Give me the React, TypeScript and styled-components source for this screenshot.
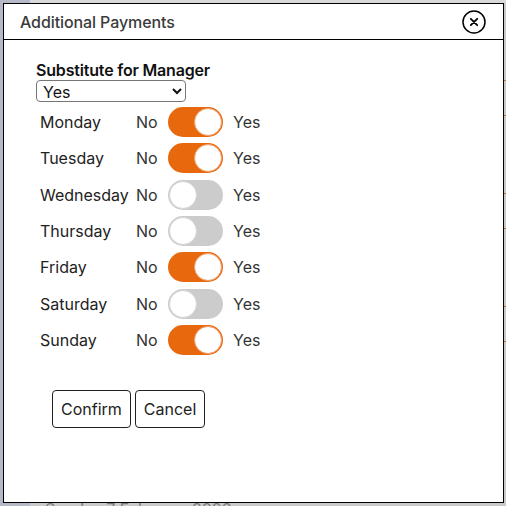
import React, { useState } from "react";
import styled, { createGlobalStyle } from "styled-components";

const Global = createGlobalStyle`
  html, body { margin: 0; padding: 0; }
  body {
    width: 506px; height: 506px; overflow: hidden;
    font-family: Inter, "Noto Sans", Arial, sans-serif;
    background: #c9c9c9;
  }
`;

const Page = styled.div`
  display: flex;
  width: 506px;
  height: 506px;
`;

const Sidebar = styled.div`
  width: 30px;
  background: #b5b8c6;
`;

const Main = styled.div`
  flex: 1;
  display: flex;
  flex-direction: column;
  background: #cacaca;
  border-top: 3px solid #d9d9d9;
`;

const DayBlock = styled.div`
  height: 113px;
  flex-shrink: 0;
  border-bottom: 1px solid #d2691e;
  box-sizing: border-box;
  display: flex;
  flex-direction: column;
  justify-content: flex-end;
`;

const DayHeadLine = styled.div`
  height: 34px;
  border-top: 1px solid #d2691e;
`;

const DimDate = styled.div`
  margin-top: auto;
  padding-left: 15px;
  height: 6px;
  overflow: hidden;
  font-size: 16px;
  line-height: 18px;
  color: #7a7a7a;
`;

const Overlay = styled.div`
  position: fixed;
  left: 3px;
  top: 3px;
  width: 501px;
  height: 500px;
  box-sizing: border-box;
  background: #fff;
  border: 1px solid #000;
  display: flex;
  flex-direction: column;
`;

const Header = styled.div`
  height: 36px;
  box-sizing: border-box;
  border-bottom: 1px solid #000;
  display: flex;
  align-items: center;
  justify-content: space-between;
  padding: 0 17px 0 16px;
`;

const Title = styled.div`
  font-size: 16px;
  font-weight: 500;
  color: #3b3b3b;
  letter-spacing: -0.1px;
`;

const CloseButton = styled.button`
  width: 24px;
  height: 24px;
  padding: 0;
  border: none;
  background: none;
  display: flex;
  align-items: center;
  justify-content: center;
  cursor: pointer;
`;

const Body = styled.div`
  padding: 21px 0 0 32px;
  display: flex;
  flex-direction: column;
  align-items: flex-start;
`;

const FieldLabel = styled.label`
  font-size: 16px;
  font-weight: 600;
  line-height: 19px;
  letter-spacing: -0.18px;
  color: #111;
`;

const Select = styled.select`
  width: 150px;
  height: 22px;
  box-sizing: border-box;
  font-family: Inter, Arial, sans-serif;
  font-size: 16px;
  color: #111;
  border: 1px solid #767676;
  border-radius: 4px;
  background: #fff;
  padding: 0 2px;
`;

const DayGrid = styled.div`
  margin: 5px 0 0 4px;
  display: grid;
  grid-template-columns: 96px 32px 55px auto;
  row-gap: 6.33px;
  align-items: center;
`;

const DayName = styled.span`
  font-size: 16px;
  color: #222;
`;

const Choice = styled.span<{ $pad?: boolean }>`
  font-size: 16px;
  color: #333;
  padding-left: ${(p) => (p.$pad ? "10px" : "0")};
`;

const Track = styled.button<{ $on: boolean }>`
  position: relative;
  width: 55px;
  height: 30px;
  padding: 0;
  border: none;
  border-radius: 15px;
  background: ${(p) => (p.$on ? "#e8680e" : "#cccccc")};
  cursor: pointer;
`;

const Knob = styled.span<{ $on: boolean }>`
  position: absolute;
  top: 1px;
  left: ${(p) => (p.$on ? "26px" : "1px")};
  width: 28px;
  height: 28px;
  box-sizing: border-box;
  border-radius: 50%;
  background: #fff;
  border: 1px solid ${(p) => (p.$on ? "#f0a06a" : "#d6d6d6")};
`;

const Actions = styled.div`
  margin: 35px 0 0 16px;
  display: flex;
  gap: 4px;
`;

const ActionButton = styled.button`
  height: 38px;
  padding: 0 8px;
  font-family: Inter, Arial, sans-serif;
  font-size: 16px;
  color: #222;
  background: #fff;
  border: 1px solid #222;
  border-radius: 4px;
  cursor: pointer;
`;

const days: [string, boolean][] = [
  ["Monday", true],
  ["Tuesday", true],
  ["Wednesday", false],
  ["Thursday", false],
  ["Friday", true],
  ["Saturday", false],
  ["Sunday", true],
];

export default function App() {
  const [state, setState] = useState(days.map((d) => d[1]));
  return (
    <>
      <Global />
      <Page>
        <Sidebar />
        <Main>
          <DayBlock><DayHeadLine /></DayBlock>
          <DayBlock><DayHeadLine /></DayBlock>
          <DayBlock><DayHeadLine /></DayBlock>
          <DimDate>Sunday 7 February 2026</DimDate>
        </Main>
      </Page>
      <Overlay>
        <Header>
          <Title>Additional Payments</Title>
          <CloseButton aria-label="Close">
            <svg width="24" height="24" viewBox="0 0 24 24">
              <circle cx="12" cy="12" r="11" fill="none" stroke="#000" strokeWidth="1.5" />
              <path d="M8.8 8.8 L15.2 15.2 M15.2 8.8 L8.8 15.2" stroke="#000" strokeWidth="1.8" strokeLinecap="round" />
            </svg>
          </CloseButton>
        </Header>
        <Body>
          <FieldLabel>Substitute for Manager</FieldLabel>
          <Select defaultValue="Yes">
            <option>Yes</option>
            <option>No</option>
          </Select>
          <DayGrid>
            {days.map(([name], i) => (
              <React.Fragment key={name}>
                <DayName>{name}</DayName>
                <Choice>No</Choice>
                <Track
                  $on={state[i]}
                  onClick={() => setState((s) => s.map((v, j) => (j === i ? !v : v)))}
                >
                  <Knob $on={state[i]} />
                </Track>
                <Choice $pad>Yes</Choice>
              </React.Fragment>
            ))}
          </DayGrid>
          <Actions>
            <ActionButton>Confirm</ActionButton>
            <ActionButton>Cancel</ActionButton>
          </Actions>
        </Body>
      </Overlay>
    </>
  );
}
